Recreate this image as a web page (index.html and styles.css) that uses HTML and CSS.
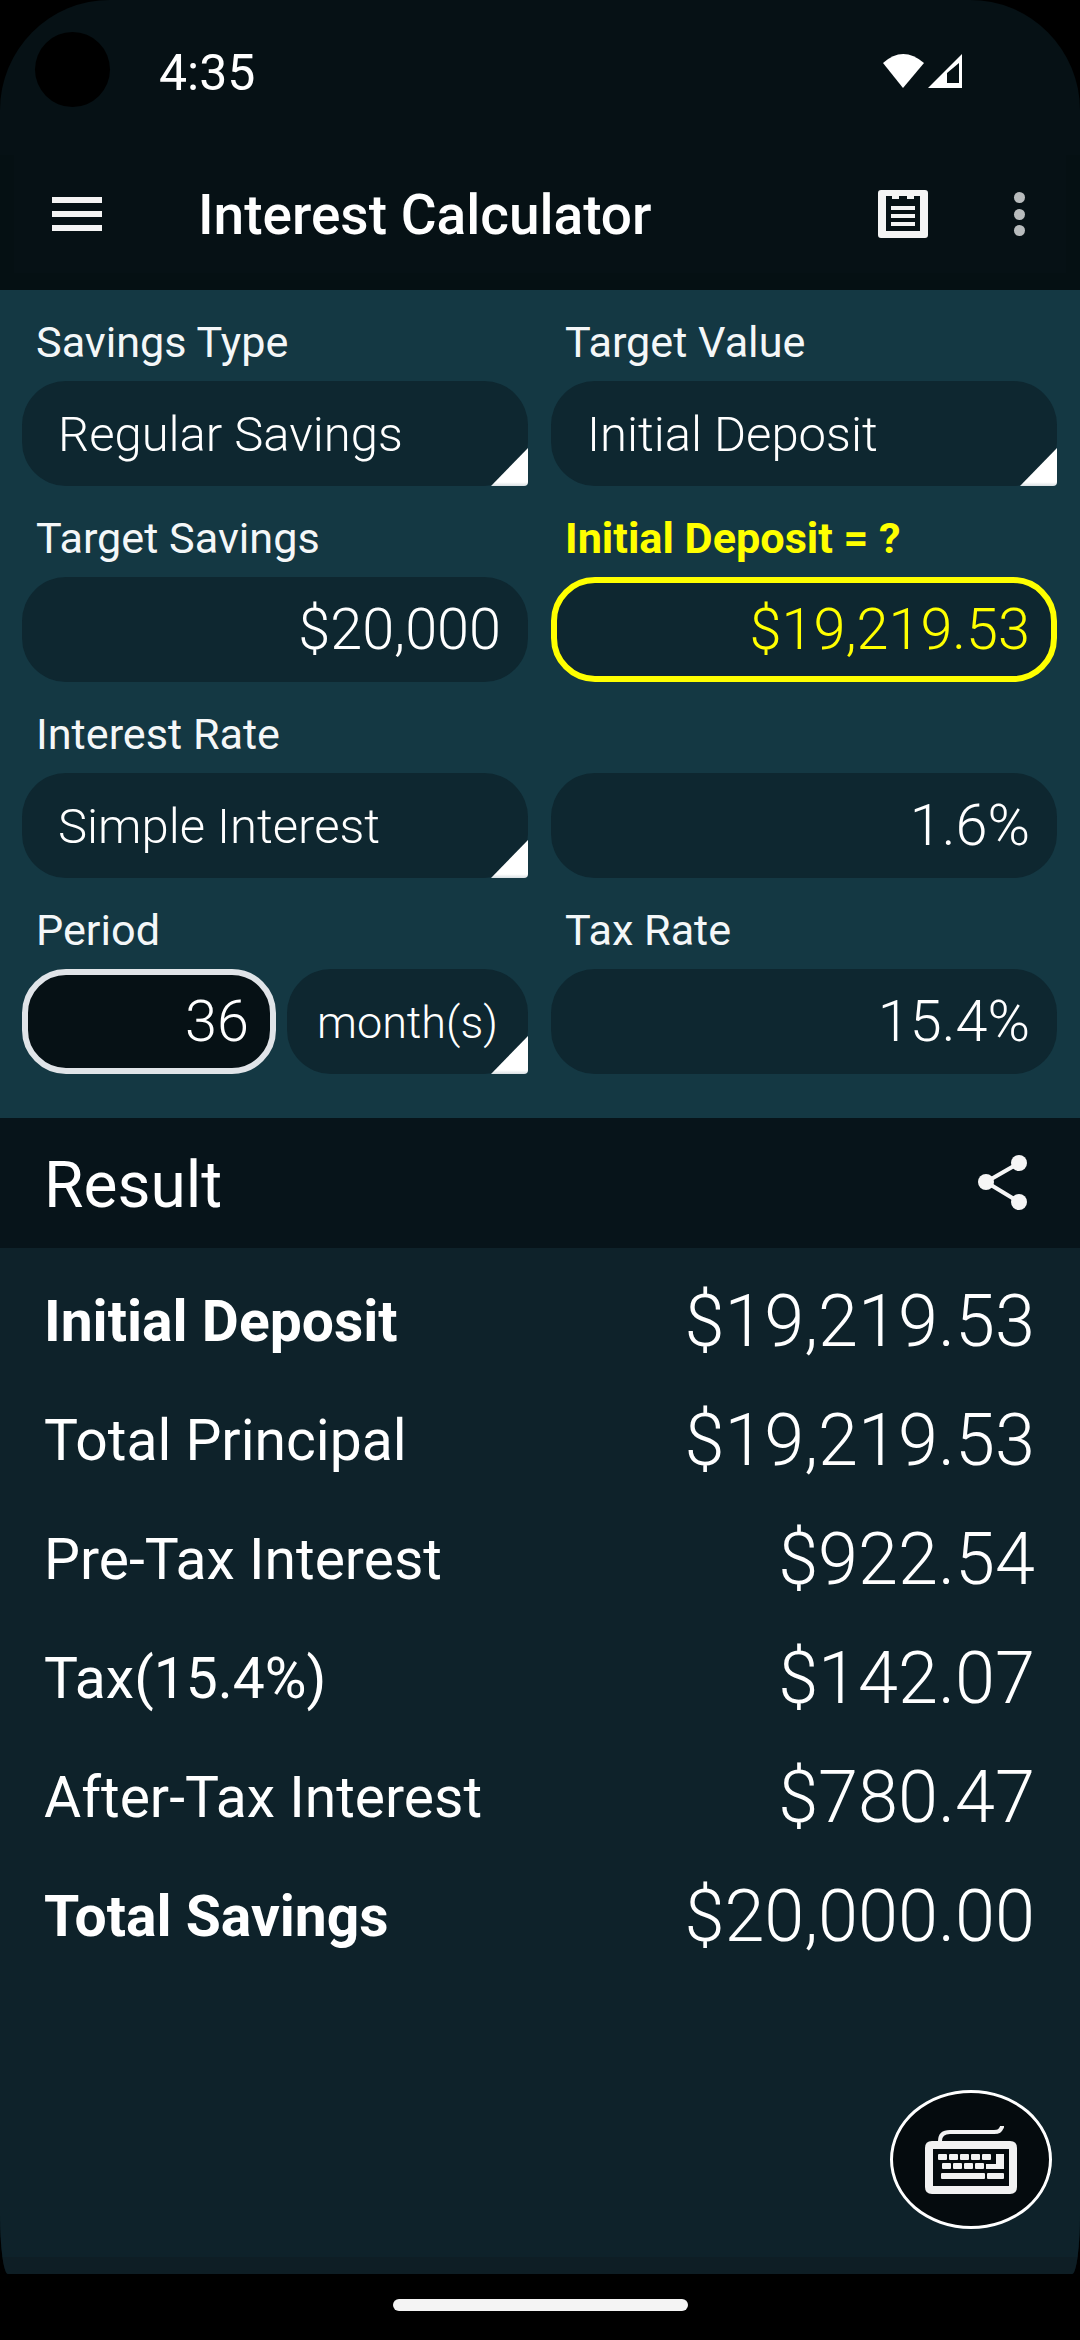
FILE: index.html
```html
<!DOCTYPE html>
<html lang="en">
<head>
    <meta charset="UTF-8">
    <meta name="viewport" content="width=device-width, initial-scale=1.0">
    <title>Interest Calculator</title>
    <link rel="stylesheet" href="styles.css">
</head>
<body>
    <div class="screen">
        <div class="status-bar">
            <div class="camera"></div>
            <span class="clock">4:35</span>
            <svg class="status-icons" width="80" height="36" viewBox="0 0 80 36">
                <path d="M1 10 Q21 -8 42 10 L21 35 Z" fill="#fff"/>
                <path fill-rule="evenodd" d="M46 35 L80 1 V35 Z M65 30 H77 V10 L65 20 Z" fill="#fff"/>
            </svg>
        </div>

        <div class="toolbar">
            <div class="toolbar-inner">
                <svg class="menu-icon" width="50" height="34" viewBox="0 0 50 34" fill="#f4f4f4">
                    <rect width="50" height="6"/>
                    <rect y="14" width="50" height="6"/>
                    <rect y="28" width="50" height="6"/>
                </svg>
                <h1 class="title">Interest Calculator</h1>
                <svg class="clip-icon" width="50" height="48" viewBox="0 0 50 48">
                    <path fill-rule="evenodd" fill="#f4f4f4" d="M3 0 H47 Q50 0 50 3 V45 Q50 48 47 48 H3 Q0 48 0 45 V3 Q0 0 3 0 Z M8 6 V41 H42 V6 H36 V9 H29 V6 H21 V9 H14 V6 Z"/>
                    <rect x="13" y="16" width="24" height="4" fill="#f4f4f4"/>
                    <rect x="13" y="24" width="24" height="4" fill="#f4f4f4"/>
                    <rect x="13" y="32" width="24" height="4" fill="#f4f4f4"/>
                </svg>
                <div class="more-icon">
                    <span></span><span></span><span></span>
                </div>
            </div>
        </div>

        <form class="panel">
            <div class="group">
                <div class="label">Savings Type</div>
                <div class="field select">Regular Savings</div>
            </div>
            <div class="group">
                <div class="label">Target Value</div>
                <div class="field select">Initial Deposit</div>
            </div>
            <div class="group">
                <div class="label">Target Savings</div>
                <div class="field">$20,000</div>
            </div>
            <div class="group">
                <div class="label label-target">Initial Deposit = ?</div>
                <div class="field field-target">$19,219.53</div>
            </div>
            <div class="group">
                <div class="label">Interest Rate</div>
                <div class="field select">Simple Interest</div>
            </div>
            <div class="group">
                <div class="label"></div>
                <div class="field">1.6%</div>
            </div>
            <div class="group">
                <div class="label">Period</div>
                <div class="period">
                    <div class="field field-focus">36</div>
                    <div class="field select unit">month(s)</div>
                </div>
            </div>
            <div class="group">
                <div class="label">Tax Rate</div>
                <div class="field">15.4%</div>
            </div>
        </form>

        <div class="result-head">
            <h2>Result</h2>
            <svg width="50" height="56" viewBox="0 0 50 56" fill="#f6f6f6" stroke="#f6f6f6">
                <path d="M8 27 L41 8 M8 27 L41 47" stroke-width="4" fill="none"/>
                <circle cx="41" cy="8" r="8" stroke="none"/>
                <circle cx="8" cy="27" r="8" stroke="none"/>
                <circle cx="41" cy="47" r="8" stroke="none"/>
            </svg>
        </div>

        <div class="results">
            <div class="row strong"><span>Initial Deposit</span><span class="amount">$19,219.53</span></div>
            <div class="row"><span>Total Principal</span><span class="amount">$19,219.53</span></div>
            <div class="row"><span>Pre-Tax Interest</span><span class="amount">$922.54</span></div>
            <div class="row"><span>Tax(15.4%)</span><span class="amount">$142.07</span></div>
            <div class="row"><span>After-Tax Interest</span><span class="amount">$780.47</span></div>
            <div class="row strong"><span>Total Savings</span><span class="amount">$20,000.00</span></div>

            <button class="fab" type="button">
                <svg width="94" height="68" viewBox="0 0 94 68" fill="#f2f2f2">
                    <path d="M16 15 C16 8 20 6 26 6 H70 C75 6 76 5 78 1" fill="none" stroke="#f2f2f2" stroke-width="4" stroke-linecap="round"/>
                    <path fill-rule="evenodd" d="M8 15 H86 Q93 15 93 22 V61 Q93 68 86 68 H8 Q1 68 1 61 V22 Q1 15 8 15 Z M9 23 V60 H85 V23 Z"/>
                    <rect x="14" y="28" width="9" height="6" rx="1"/>
                    <rect x="25" y="28" width="9" height="6" rx="1"/>
                    <rect x="36" y="28" width="9" height="6" rx="1"/>
                    <rect x="47" y="28" width="9" height="6" rx="1"/>
                    <rect x="58" y="28" width="9" height="6" rx="1"/>
                    <rect x="18" y="37" width="9" height="6" rx="1"/>
                    <rect x="29" y="37" width="9" height="6" rx="1"/>
                    <rect x="40" y="37" width="9" height="6" rx="1"/>
                    <rect x="51" y="37" width="9" height="6" rx="1"/>
                    <path d="M62 43 V38 H72 V28 H80 V43 Z"/>
                    <rect x="17" y="47" width="44" height="6" rx="1"/>
                    <rect x="63" y="47" width="17" height="6" rx="1"/>
                </svg>
            </button>
        </div>
        <div class="bottom-strip"></div>
    </div>

    <div class="nav-bar"><div class="home-pill"></div></div>
</body>
</html>
```

FILE: styles.css
```css
:root {
    --bar-color: #061115;
    --panel-color: #143843;
    --field-color: #0e2730;
    --result-color: #0e222a;
}

* {
    box-sizing: border-box;
}

body {
    width: 1080px;
    height: 2340px;
    margin: 0;
    display: flex;
    flex-direction: column;
    overflow: hidden;
    background: #000;
    color: #fff;
    font-family: Roboto, 'Liberation Sans', sans-serif;
}

h1, h2 {
    margin: 0;
}

.screen {
    flex: 1;
    display: flex;
    flex-direction: column;
    overflow: hidden;
    background: var(--bar-color);
    border-radius: 110px 110px 8px 8px / 110px 110px 60px 60px;
}

/* status bar */
.status-bar {
    height: 155px;
    display: flex;
    align-items: flex-start;
    padding: 32px 118px 0 35px;
}

.camera {
    width: 75px;
    height: 75px;
    border-radius: 50%;
    background: #000;
}

.clock {
    margin-left: 49px;
    margin-top: 16px;
    font-size: 50px;
    line-height: 50px;
}

.status-icons {
    margin-left: auto;
    margin-top: 21px;
}

/* toolbar */
.toolbar {
    height: 135px;
    padding: 0 14px 17px;
    background: #051013;
}

.toolbar-inner {
    height: 100%;
    display: flex;
    align-items: center;
    background: var(--bar-color);
}

.menu-icon {
    margin-left: 38px;
}

.title {
    margin-left: 96px;
    padding-top: 2px;
    font-size: 55px;
    font-weight: 500;
}

.clip-icon {
    margin-left: auto;
}

.more-icon {
    width: 11px;
    margin: 0 41px 0 86px;
    display: flex;
    flex-direction: column;
    gap: 5.5px;
}

.more-icon span {
    height: 11px;
    border-radius: 50%;
    background: #b8bcbd;
}

/* input panel */
.panel {
    height: 828px;
    margin: 0;
    padding: 0 23px 0 22px;
    display: grid;
    grid-template-columns: 506px 506px;
    column-gap: 23px;
    align-content: start;
    background: var(--panel-color);
}

.label {
    height: 91px;
    padding: 28px 0 0 14px;
    font-size: 43.2px;
    line-height: 50px;
    color: #f4f7f8;
}

.label-target {
    color: #ffff00;
    font-weight: 700;
}

.field {
    position: relative;
    height: 105px;
    padding: 0 21px;
    display: flex;
    align-items: center;
    justify-content: flex-end;
    border: 6px solid transparent;
    border-radius: 44px;
    background: var(--field-color);
    font-size: 57.6px;
    font-weight: 300;
}

.select {
    justify-content: flex-start;
    border: 0;
    padding-top: 2px;
    padding-left: 36px;
    font-size: 49px;
}

/* white corner on the dropdowns */
.select::after {
    content: '';
    position: absolute;
    right: 0;
    bottom: 0;
    width: 37px;
    height: 38px;
    border-bottom-right-radius: 4px;
    background: linear-gradient(#fff 90%, #d8dfe2);
    clip-path: polygon(100% 0, 100% 100%, 0 100%);
}

.field-target {
    border-color: #ffff00;
    color: #ffff00;
}

.field-focus {
    border-color: #e0e4e8;
    background: var(--bar-color);
}

.period {
    display: flex;
    gap: 11px;
}

.period .field-focus {
    width: 254px;
}

.unit {
    flex: 1;
    padding-left: 30px;
    font-size: 45px;
}

/* results */
.result-head {
    height: 130px;
    padding: 0 52px 0 44px;
    display: flex;
    align-items: center;
    justify-content: space-between;
    background: #07141a;
}

.result-head h2 {
    padding-top: 4px;
    font-size: 64px;
    font-weight: 400;
}

.results {
    position: relative;
    flex: 1;
    padding: 14px 45px 0 44px;
    background: var(--result-color);
}

.row {
    height: 119px;
    display: flex;
    align-items: center;
    justify-content: space-between;
    font-size: 57px;
}

.strong {
    font-weight: 700;
}

.amount {
    font-size: 72px;
    font-weight: 300;
}

.fab {
    position: absolute;
    right: 28px;
    bottom: 28px;
    width: 162px;
    height: 139px;
    padding: 0;
    display: flex;
    align-items: center;
    justify-content: center;
    border: 3px solid #fff;
    border-radius: 50%;
    background: #050b0e;
}

.bottom-strip {
    height: 17px;
    background: #0e1e25;
}

/* nav bar */
.nav-bar {
    height: 66px;
    display: flex;
    justify-content: center;
    padding-top: 25px;
}

.home-pill {
    width: 295px;
    height: 12px;
    border-radius: 6px;
    background: #f4f4f4;
}
```
